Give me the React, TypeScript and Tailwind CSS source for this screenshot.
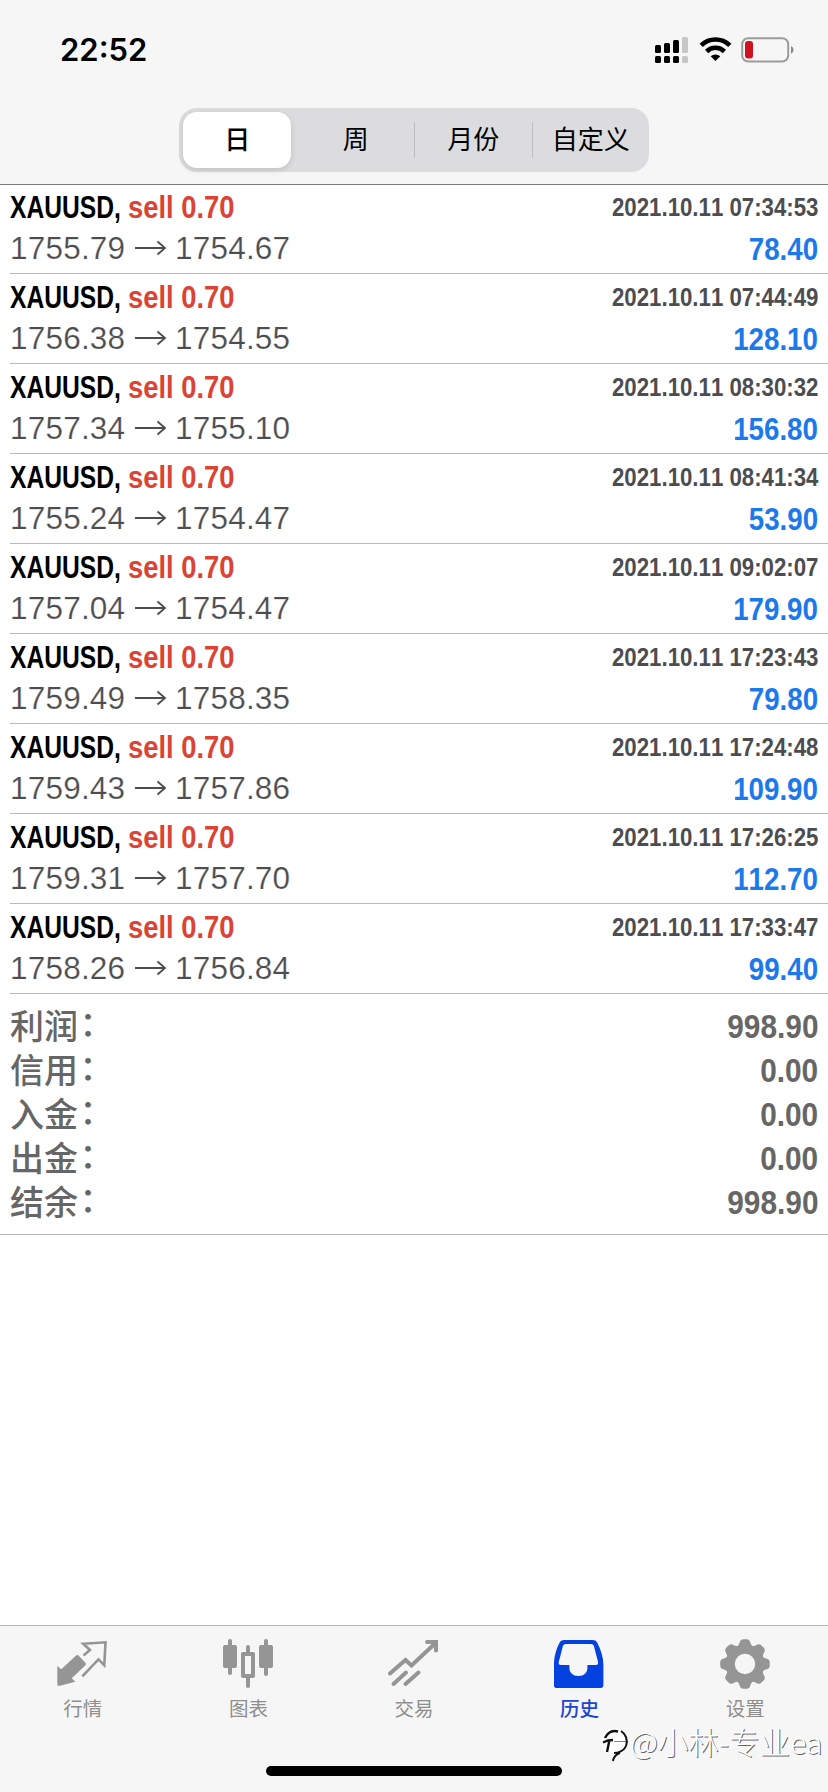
const deals = [
  { open: "1755.79", close: "1754.67", time: "2021.10.11 07:34:53", profit: "78.40" },
  { open: "1756.38", close: "1754.55", time: "2021.10.11 07:44:49", profit: "128.10" },
  { open: "1757.34", close: "1755.10", time: "2021.10.11 08:30:32", profit: "156.80" },
  { open: "1755.24", close: "1754.47", time: "2021.10.11 08:41:34", profit: "53.90" },
  { open: "1757.04", close: "1754.47", time: "2021.10.11 09:02:07", profit: "179.90" },
  { open: "1759.49", close: "1758.35", time: "2021.10.11 17:23:43", profit: "79.80" },
  { open: "1759.43", close: "1757.86", time: "2021.10.11 17:24:48", profit: "109.90" },
  { open: "1759.31", close: "1757.70", time: "2021.10.11 17:26:25", profit: "112.70" },
  { open: "1758.26", close: "1756.84", time: "2021.10.11 17:33:47", profit: "99.40" },
];

const totals = [
  { label: "利润", value: "998.90" },
  { label: "信用", value: "0.00" },
  { label: "入金", value: "0.00" },
  { label: "出金", value: "0.00" },
  { label: "结余", value: "998.90" },
];

function StatusIcons() {
  return (
    <svg width="142" height="30" viewBox="0 0 142 30" fill="#000">
      <rect x="1" y="10" width="6" height="8" rx="1.5" />
      <rect x="10" y="8" width="6" height="10" rx="1.5" />
      <rect x="19" y="5" width="6" height="13" rx="1.5" />
      <rect x="28" y="2" width="6" height="16" rx="1.5" fill="#c6c6c6" />
      <rect x="1" y="21" width="6" height="7" rx="1.5" />
      <rect x="10" y="21" width="6" height="7" rx="1.5" />
      <rect x="19" y="21" width="6" height="7" rx="1.5" />
      <rect x="28" y="21" width="6" height="7" rx="1.5" fill="#c6c6c6" />
      <g fill="none" stroke="#000" strokeWidth="4.6">
        <path d="M47.2 10.3a20.5 20.5 0 0 1 28.600 0" />
        <path d="M52.6 16.5a12.6 12.6 0 0 1 17.800 0" />
      </g>
      <path d="M61.5 26l-4.8-4.7a7 7 0 0 1 9.600 0z" />
      <rect x="88.2" y="3.2" width="46" height="23.3" rx="6" fill="none" stroke="#9c9c9c" strokeWidth="2" />
      <rect x="91" y="6" width="8" height="17.5" rx="3" fill="#d0111f" />
      <path d="M137 11a4.4 4.4 0 0 1 0 8z" fill="#8a8a8a" />
    </svg>
  );
}

function QuotesIcon() {
  return (
    <svg width="52" height="52" viewBox="0 0 52 52" fill="#959595">
      <path d="M.3 27l4 3.300L18.800 16.800q1.500-1.500 3 0l6.400 6.700q1.500 1.500 0 3L14.700 39.300l3.600 3.500L2 47Q.3 47 .3 45z" />
      <path
        d="M26.500 16.500L33 11l-6.800-6.200L48.500 3.300l-1.200 23-5.800-6L25.300 37.300"
        fill="none"
        stroke="#959595"
        strokeWidth="2.600"
      />
    </svg>
  );
}

function ChartIcon() {
  return (
    <svg width="52" height="52" viewBox="0 0 52 52" fill="#959595">
      <rect x="6" y="0" width="4" height="36" rx="2" />
      <rect x="1" y="6" width="14" height="23" rx="2" />
      <rect x="24" y="6" width="4" height="43" rx="2" />
      <rect x="19" y="13" width="14" height="26" rx="2" />
      <rect x="23" y="17" width="6" height="18" fill="#f6f6f6" />
      <rect x="42" y="0" width="4" height="37" rx="2" />
      <rect x="37" y="6" width="14" height="23" rx="2" />
    </svg>
  );
}

function TradeIcon() {
  return (
    <svg width="52" height="52" viewBox="1 0 52 52" fill="none" stroke="#959595" strokeWidth="4" strokeLinecap="round">
      <path d="M3 34.500L18.500 21l6 5.500L48 4.500" />
      <path d="M40 3h9v8.500" />
      <path d="M6.500 45L19 33.500M18.500 45l13-11.500" />
    </svg>
  );
}

function HistoryIcon() {
  return (
    <svg width="52" height="52" viewBox="1.600 0 52 52">
      <path
        fill="#0442df"
        fillRule="evenodd"
        d="M12 1h28c3 0 4 1 5 3 3.500 7 6 14 6 22v20c0 2-1 3-3 3H4.500c-2 0-3-1-3-3V26C1.500 18 3.500 11 7 4c1-2 2-3 5-3zM13.500 5C11.500 5 11 6 10.500 7L6.500 22.500C6 25 6.500 26 8.500 26h8.500v3c0 4.500 3.500 8 9 8s9-3.500 9-8v-3h8.500c2 0 2.500-1 2-3.500L41.500 7c-.5-1-1-2-3-2z"
      />
    </svg>
  );
}

function SettingsIcon() {
  return (
    <svg width="52" height="52" viewBox="0 0 52 52" fill="#959595">
      {[0, 45, 90, 135, 180, 225, 270, 315].map((angle) => (
        <path
          key={angle}
          d="M16.500 8.500C19.500 7 20 5.500 21 2.500 21.800.6 22.600.2 26 .2s4.200.4 5 2.300c1 3 1.500 4.500 4.500 6z"
          transform={`rotate(${angle} 26 25)`}
        />
      ))}
      <circle cx="26" cy="25" r="14.500" fill="none" stroke="#959595" strokeWidth="8.600" />
    </svg>
  );
}

const tabs = [
  { label: "行情", icon: <QuotesIcon /> },
  { label: "图表", icon: <ChartIcon /> },
  { label: "交易", icon: <TradeIcon /> },
  { label: "历史", icon: <HistoryIcon />, active: true },
  { label: "设置", icon: <SettingsIcon /> },
];

function Segment({ label, active, divided }: { label: string; active?: boolean; divided?: boolean }) {
  return (
    <div className="relative flex h-full flex-1 items-center justify-center">
      {divided && <span className="absolute left-0 h-9 w-px bg-[#bcbcbf]" />}
      <span
        className={
          active
            ? "mr-px flex h-14 w-[108px] items-center justify-center rounded-[14px] bg-white font-medium shadow-[0_2px_6px_rgba(0,0,0,0.12)]"
            : "pl-px"
        }
      >
        {label}
      </span>
    </div>
  );
}

function DealRow({ deal }: { deal: (typeof deals)[number] }) {
  return (
    <li className="ml-2.5 flex h-[90px] justify-between border-b border-[#b9b9b9] pr-2.5 whitespace-nowrap">
      <div>
        <div className="flex h-[43px] pt-[5px] text-[32px] leading-9 font-bold">
          <span className="w-[118px] origin-left scale-x-[.77] text-black">XAUUSD,</span>
          <span className="origin-left scale-x-[.855] text-[#dc4335]">sell 0.70</span>
        </div>
        <div className="flex items-center text-[31.5px] leading-[42px] text-[#4d4d4f] [-webkit-text-stroke:0.2px_#fff]">
          <span className="w-[125px] tracking-[0.2px]">{deal.open}</span>
          <svg width="32" height="16" viewBox="0 0 32 16" fill="none" stroke="#4d4d4f" strokeWidth="1.800">
            <path d="M0 8h29.500M22.500 1.500L30 8l-7.500 6.500" />
          </svg>
          <span className="ml-2 tracking-[0.2px]">{deal.close}</span>
        </div>
      </div>
      <div className="flex flex-col items-end font-bold [font-kerning:none]">
        <span className="h-[42px] origin-right scale-x-[.855] pt-[5px] text-[26px] leading-9 text-[#4d4d4f]">{deal.time}</span>
        <span className="origin-right scale-x-[.865] text-[32px] leading-[46px] text-[#1b79ec]">{deal.profit}</span>
      </div>
    </li>
  );
}

export default function App() {
  return (
    <div className="relative flex h-[1792px] w-[828px] flex-col overflow-hidden bg-white font-['Liberation_Sans','Noto_Sans_CJK_SC',sans-serif]">
      <header className="flex h-[185px] flex-col border-b border-[#7c7c7c] bg-[#f6f6f6]">
        <div className="flex h-[108px] items-start justify-between pt-[30px] pr-8 pl-[60px]">
          <span className="font-['Inter',sans-serif] text-[31px] leading-10 font-semibold text-black">22:52</span>
          <div className="pt-[5px]">
            <StatusIcons />
          </div>
        </div>
        <div className="mx-auto flex h-16 w-[470px] items-center rounded-[18px] bg-[#dcdcde] text-[26px] text-black">
          <Segment label="日" active />
          <Segment label="周" />
          <Segment label="月份" divided />
          <Segment label="自定义" divided />
        </div>
      </header>

      <ul className="-mt-px">
        {deals.map((deal) => (
          <DealRow key={deal.time} deal={deal} />
        ))}
      </ul>

      <div className="h-[241px] border-b border-[#b9b9b9] pt-2.5 pr-2.5 pl-2.5 text-[#666]">
        {totals.map((row) => (
          <div key={row.label} className="flex h-11 items-center justify-between">
            <span className="flex pb-0.5 font-['Noto_Sans_CJK_SC',sans-serif] text-[34px] leading-[42px] font-medium">
              {row.label}
              <span className="-mt-px -ml-[7px] font-['Noto_Sans_CJK_JP',sans-serif]">：</span>
            </span>
            <span className="origin-right scale-x-[.89] pt-0.5 text-[33.5px] leading-[42px] font-bold">{row.value}</span>
          </div>
        ))}
      </div>

      <div className="flex-1" />

      <nav className="flex h-[167px] border-t border-[#b5b5b5] bg-[#f6f6f6] pt-[13px]">
        {tabs.map((tab) => (
          <div key={tab.label} className="flex flex-1 flex-col items-center">
            {tab.icon}
            <span className={tab.active ? "mt-1 text-[19.5px] leading-7 font-medium text-[#2045cf]" : "mt-1 text-[19.5px] leading-7 text-[#8e8e8e]"}>
              {tab.label}
            </span>
          </div>
        ))}
      </nav>

      <div className="absolute bottom-4 left-[266px] h-2.5 w-[296px] rounded-full bg-black" />

      <div className="absolute top-[1722px] left-[600px] flex items-center text-white">
        <svg width="30" height="42" viewBox="0 0 30 42" fill="none">
          <circle cx="14" cy="20" r="13.500" fill="#fff" />
          <path d="M5 16C8 10 13 8 18 9.500M3 20.500l5-2 5-.500M7 30l2.500-12" stroke="#111" strokeWidth="2.400" />
          <path d="M14 19.500h14" stroke="#888" strokeWidth="1" />
          <path d="M21 9c5 3 7 9 5 15-2 5-8 7-12 7 M20 31c-4 1-6 3-7 8" stroke="#111" strokeWidth="2" />
        </svg>
        <span className="-mt-1 font-['Noto_Sans_CJK_SC',sans-serif] text-[30.5px] leading-9 font-light whitespace-nowrap [text-shadow:1px_1px_0_#666]">
          @小林-专业ea
        </span>
      </div>
    </div>
  );
}
